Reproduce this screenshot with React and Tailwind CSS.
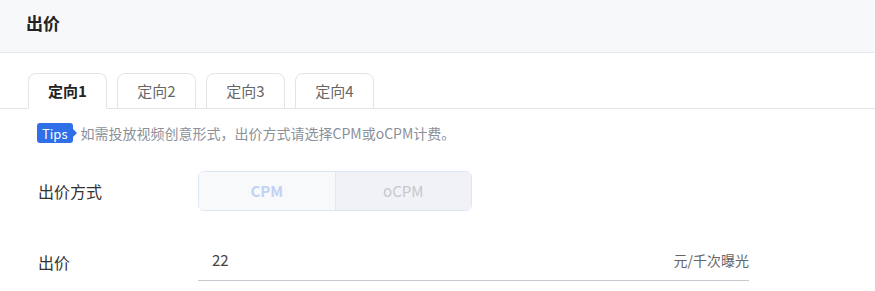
export default function App() {
  const font = { fontFamily: '"Noto Sans CJK SC", "Noto Sans", sans-serif' };
  const tabs = ["定向1", "定向2", "定向3", "定向4"];
  return (
    <div className="w-[875px] h-[291px] bg-white overflow-hidden" style={font}>
      <div className="h-[53px] bg-[#f7f8fa] border-b border-[#e8e9ee] flex items-start pt-[14px] pl-[26px]">
        <span className="text-[17px] font-bold text-[#222] leading-none">出价</span>
      </div>
      <div className="mt-[20px] flex items-end gap-[10px] pl-[28px] border-b border-[#e3e4ea] h-[36px]">
        {tabs.map((t, i) => (
          <div
            key={t}
            className={
              "w-[79px] h-[36px] rounded-t-[8px] border border-[#e3e4ea] flex items-center justify-center text-[15px] -mb-px bg-white " +
              (i === 0 ? "border-b-white font-bold text-[#222]" : "text-[#666]")
            }
          >
            {t}
          </div>
        ))}
      </div>
      <div className="mt-[14px] flex items-center pl-[37px] h-[20px]">
        <div className="relative h-[20px] bg-[#2f6fe8] rounded-[3px] px-[5px] flex items-center text-white text-[13px] leading-none">
          Tips
          <span className="absolute right-[-4px] top-[6px] w-0 h-0 border-y-[4px] border-y-transparent border-l-[4px] border-l-[#2f6fe8]"></span>
        </div>
        <span className="ml-[8px] text-[14px] text-[#8c9099] leading-none">如需投放视频创意形式，出价方式请选择CPM或oCPM计费。</span>
      </div>
      <div className="mt-[28px] flex items-center h-[40px]">
        <div className="w-[198px] pl-[38px] text-[16px] text-[#333]">出价方式</div>
        <div className="w-[274px] h-[40px] rounded-[6px] border border-[#dfe7f7] flex overflow-hidden">
          <div className="flex-1 bg-[#f8f9fb] flex items-center justify-center text-[15px] font-bold text-[#c3d2f5] border-r border-[#dfe7f7]">CPM</div>
          <div className="flex-1 bg-[#f1f2f6] flex items-center justify-center text-[15px] text-[#c5c7cd]">oCPM</div>
        </div>
      </div>
      <div className="mt-[30px] flex items-center">
        <div className="w-[198px] pl-[38px] text-[16px] text-[#333] pt-[2px]">出价</div>
        <div className="w-[551px] h-[40px] border-b border-[#c9c9d2] flex items-center justify-between pl-[14px]">
          <span className="text-[15px] text-[#444]">22</span>
          <span className="text-[14px] text-[#666]">元/千次曝光</span>
        </div>
      </div>
    </div>
  );
}
